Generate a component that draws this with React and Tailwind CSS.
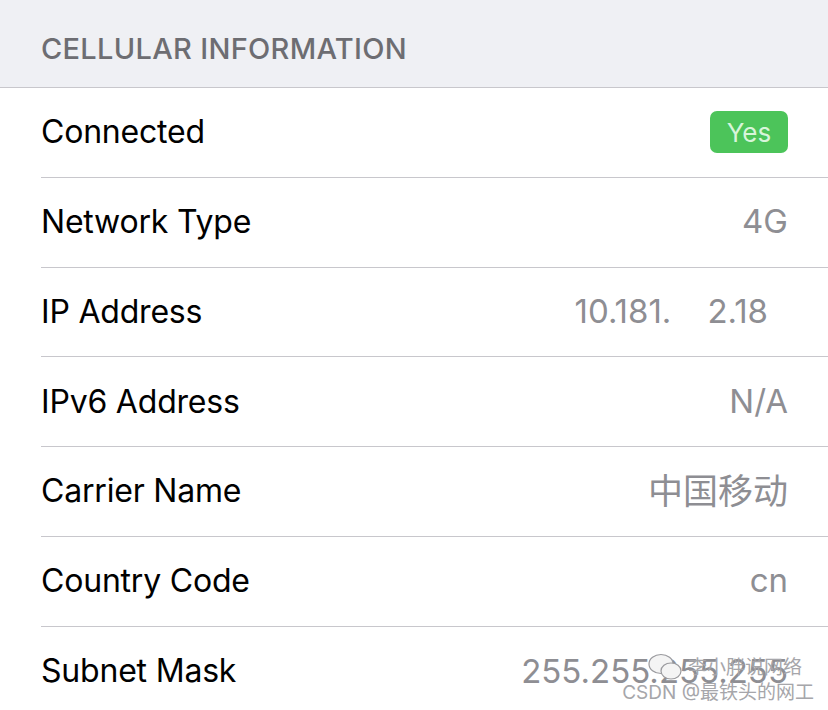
const rows = [
  { label: 'Network Type', value: '4G' },
  { label: 'IPv6 Address', value: 'N/A' },
  { label: 'Carrier Name', value: '中国移动', cjk: true },
  { label: 'Country Code', value: 'cn' },
]

const Row = ({ label, children, last }) => (
  <div className={`ml-[41px] flex h-[89.75px] items-center justify-between pr-[40px] ${last ? '' : 'border-b border-[#c8c7cc]'}`}>
    <span className="text-[32px] tracking-[-0.2px] text-black">{label}</span>
    {children}
  </div>
)

const Value = ({ children, className = '' }) => (
  <span className={`text-[33px] text-[#8e8e93] ${className}`}>{children}</span>
)

export default function App() {
  return (
    <div
      className="relative h-[710px] w-[828px] overflow-hidden bg-white"
      style={{ fontFamily: 'Inter, "Noto Sans CJK SC", sans-serif' }}
    >
      {/* section header */}
      <div className="flex h-[88px] items-center border-b border-[#c8c7cc] bg-[#eff0f4] pl-[41px] pt-[10px]">
        <span className="text-[29px] font-medium tracking-[0.3px] text-[#6d6d72]">CELLULAR INFORMATION</span>
      </div>

      <Row label="Connected">
        <span className="flex h-[42px] w-[78px] items-center justify-center rounded-[7px] bg-[#4cc45a] text-[26px] text-[#d8f5da]">
          Yes
        </span>
      </Row>

      <Row label={rows[0].label}>
        <Value>{rows[0].value}</Value>
      </Row>

      <Row label="IP Address">
        <span className="mr-[20px] flex gap-[36px]">
          <Value>10.181.</Value>
          <Value>2.18</Value>
        </span>
      </Row>

      {rows.slice(1).map((r) => (
        <Row key={r.label} label={r.label}>
          <Value className={r.cjk ? '!text-[35px]' : ''}>{r.value}</Value>
        </Row>
      ))}

      <Row label="Subnet Mask" last>
        <Value>255.255.255.255</Value>
      </Row>

      {/* watermark */}
      <div className="absolute bottom-[8px] right-[14px] flex flex-col items-end leading-none text-[#a6a6aa]">
        <div className="mr-[12px] flex items-center gap-[2px]">
          <svg width="40" height="30" viewBox="0 0 40 30" fill="#f4f4f4" stroke="#9a9a9e" strokeWidth="1.2">
            <ellipse cx="15" cy="12" rx="12" ry="9.5" />
            <ellipse cx="25" cy="19" rx="10" ry="8" />
          </svg>
          <span className="text-[19px]">李小胖说网络</span>
        </div>
        <span className="mt-[1px] text-[19px]">CSDN @最铁头的网工</span>
      </div>
    </div>
  )
}
